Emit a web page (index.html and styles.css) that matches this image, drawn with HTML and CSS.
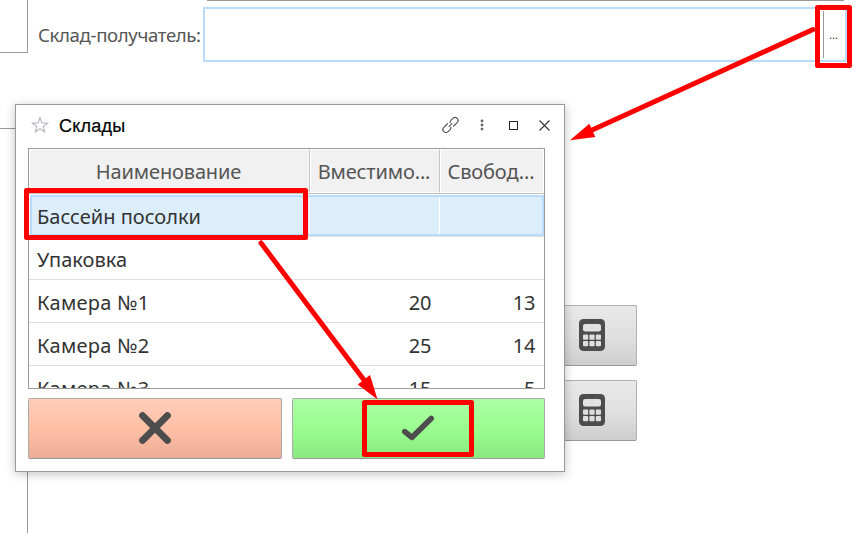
FILE: index.html
```html
<!DOCTYPE html>
<html lang="ru">
<head>
<meta charset="utf-8">
<title>Склады</title>
<link rel="stylesheet" href="styles.css">
</head>
<body>
<div class="page">
  <aside class="side">
    <div class="side-top"></div>
    <div class="side-bottom"></div>
  </aside>
  <main class="main">
    <div class="prev-field"></div>
    <div class="field-row">
      <label class="field-label"><span>Склад-получатель:</span></label>
      <div class="field"><button class="field-more">...</button></div>
    </div>
    <div class="tools">
      <button class="tool">
        <svg width="26" height="32" viewBox="0 0 26 32"><rect width="26" height="32" rx="4.5" fill="#4d4d4d"/><rect x="4" y="5" width="18" height="7.4" rx="2.2" fill="#e2e2e2"/><g fill="#dedede"><rect x="4" y="15.6" width="5.2" height="5.2" rx="1"/><rect x="10.4" y="15.6" width="5.2" height="5.2" rx="1"/><rect x="16.8" y="15.6" width="5.2" height="5.2" rx="1"/><rect x="4" y="22" width="5.2" height="5.2" rx="1"/><rect x="10.4" y="22" width="5.2" height="5.2" rx="1"/><rect x="16.8" y="22" width="5.2" height="5.2" rx="1"/></g></svg>
      </button>
      <button class="tool">
        <svg width="26" height="32" viewBox="0 0 26 32"><rect width="26" height="32" rx="4.5" fill="#4d4d4d"/><rect x="4" y="5" width="18" height="7.4" rx="2.2" fill="#e2e2e2"/><g fill="#dedede"><rect x="4" y="15.6" width="5.2" height="5.2" rx="1"/><rect x="10.4" y="15.6" width="5.2" height="5.2" rx="1"/><rect x="16.8" y="15.6" width="5.2" height="5.2" rx="1"/><rect x="4" y="22" width="5.2" height="5.2" rx="1"/><rect x="10.4" y="22" width="5.2" height="5.2" rx="1"/><rect x="16.8" y="22" width="5.2" height="5.2" rx="1"/></g></svg>
      </button>
    </div>
  </main>
</div>

<section class="dialog">
  <header class="titlebar">
    <svg class="star" width="18" height="18" viewBox="0 0 18 18"><path d="M9 1.6 L10.9 7 L16.6 7.1 L12.1 10.5 L13.7 15.9 L9 12.7 L4.3 15.9 L5.9 10.5 L1.4 7.1 L7.1 7 Z" fill="none" stroke="#b3b8c0" stroke-width="1.1"/></svg>
    <h1 class="title">Склады</h1>
    <div class="controls">
      <svg width="18" height="18" viewBox="0 0 18 18" fill="none" stroke="#555" stroke-width="1.2" stroke-linecap="round"><g transform="translate(9.5 9) rotate(-45)"><path d="M-.5 -3 H-5.6 A3 3 0 0 0 -5.6 3 H-3 A3 3 0 0 0 -.6 1.8" transform="translate(-.8 0)"/><path d="M.5 3 H5.6 A3 3 0 0 0 5.6 -3 H3 A3 3 0 0 0 .6 -1.8" transform="translate(.8 0)"/><path d="M-2.2 0 H2.2" stroke-width="1"/></g></svg>
      <svg width="4" height="12" viewBox="0 0 4 12" fill="#666"><circle cx="2" cy="1.9" r="1.4"/><circle cx="2" cy="6" r="1.4"/><circle cx="2" cy="10.1" r="1.4"/></svg>
      <svg width="9" height="9" viewBox="0 0 9 9"><rect x=".5" y=".5" width="8" height="8" fill="none" stroke="#222"/></svg>
      <svg width="11" height="11" viewBox="0 0 11 11"><path d="M.5 .5 L10.5 10.5 M10.5 .5 L.5 10.5" stroke="#333" stroke-width="1.1"/></svg>
    </div>
  </header>
  <div class="table">
    <div class="row head">
      <div class="cell"><span class="tight">Наименование</span></div>
      <div class="cell"><span class="tight">Вместимо...</span></div>
      <div class="cell"><span class="tight">Свобод...</span></div>
    </div>
    <div class="row selected"><div class="cell"><span>Бассейн посолки</span></div><div class="cell"></div><div class="cell"></div></div>
    <div class="row"><div class="cell"><span>Упаковка</span></div><div class="cell"></div><div class="cell"></div></div>
    <div class="row"><div class="cell"><span class="wide">Камера №1</span></div><div class="cell num">20</div><div class="cell num">13</div></div>
    <div class="row"><div class="cell"><span class="wide">Камера №2</span></div><div class="cell num">25</div><div class="cell num">14</div></div>
    <div class="row"><div class="cell"><span class="wide">Камера №3</span></div><div class="cell num">15</div><div class="cell num">5</div></div>
  </div>
  <footer class="actions">
    <button class="btn cancel"><svg width="32" height="32" viewBox="0 0 32 32"><path d="M3.6 3.6 L28.4 28.4 M28.4 3.6 L3.6 28.4" stroke="#4d4d4d" stroke-width="7" stroke-linecap="round"/></svg></button>
    <button class="btn ok"><svg width="32" height="26" viewBox="0 0 32 26"><path d="M2.8 16.6 L9.8 22.4 L29.2 3.4" fill="none" stroke="#4d4d4d" stroke-width="5.6" stroke-linecap="round" stroke-linejoin="round"/></svg></button>
  </footer>
</section>

<svg class="marks" width="855" height="533" viewBox="0 0 855 533">
  <g fill="none" stroke="#f00" stroke-width="5" stroke-linecap="round" stroke-linejoin="round">
    <rect x="817.5" y="7.5" width="32" height="58"/>
    <rect x="26.5" y="190.5" width="279" height="47"/>
    <rect x="364.5" y="402.5" width="107" height="52"/>
    <path d="M813 29.5 L590 131"/>
    <path d="M261 243 L367 384"/>
  </g>
  <path d="M570 140.3 L589.3 123.7 L595.3 136.9 Z M377.5 399.5 L357.7 384.5 L370 375 Z" fill="#f00"/>
</svg>
</body>
</html>
```
FILE: styles.css
```css
* { box-sizing: border-box; }
body {
  margin: 0;
  width: 855px;
  height: 533px;
  overflow: hidden;
  position: relative;
  background: #fff;
  font-family: "Noto Sans", "Open Sans", sans-serif;
  color: #333;
}
button { padding: 0; font: inherit; }
svg { display: block; flex: none; }
span { white-space: nowrap; }

.page { display: flex; height: 533px; }
.side { width: 28px; display: flex; flex-direction: column; gap: 75px; }
.side-top { height: 53px; border: solid #999; border-width: 0 1px 1px 0; }
.side-bottom { flex: 1; border: solid #999; border-width: 1px 1px 0 0; }
.main { flex: 1; display: flex; flex-direction: column; }
.prev-field { height: 1px; margin: 0 11px 0 179px; background: #999; }
.field-row { display: flex; margin-top: 6px; height: 55px; padding-right: 8px; }
.field-label { width: 175px; padding: 0 0 1px 10px; display: flex; align-items: center; font-size: 18.6px; letter-spacing: -.36px; color: #555; }
.field { flex: 1; border: 2px solid #b9dcfa; display: flex; justify-content: flex-end; padding: 2px 0; }
.field-more { width: 22px; padding-right: 2px; border: 0; border-left: 1px solid #999; background: none; font-size: 11px; line-height: 46px; color: #333; }
.tools { margin: 243px 0 0 520px; display: flex; flex-direction: column; gap: 14px; }
.tool {
  width: 89px; height: 61px; padding: 0 0 2px 30px;
  border: 1px solid #b0b0b0; border-bottom-color: #999; border-radius: 2px;
  background: linear-gradient(#e9e9e9, #dfdfdf 55%, #cecece);
  display: flex; align-items: center;
}

.dialog {
  position: absolute; left: 15px; top: 104px; width: 550px; height: 368px;
  padding: 0 19px 0 12px;
  background: #fff; border: 1px solid #999;
  box-shadow: 0 2px 10px rgba(0, 0, 0, .24);
  display: flex; flex-direction: column;
}
.titlebar { height: 43px; display: flex; align-items: center; padding: 0 0 3px 3px; }
.title { margin: 0 0 0 10px; padding-top: 1px; font: 400 18px/20px "Liberation Sans", sans-serif; letter-spacing: .25px; color: #000; flex: 1; -webkit-text-stroke: .2px #000; }
.controls { display: flex; align-items: center; }
.controls svg:nth-child(2) { margin-left: 21px; }
.controls svg:nth-child(3) { margin-left: 25px; }
.controls svg:nth-child(4) { margin: 0 -5px 0 21px; }

.table { width: 517px; height: 241px; border: 1px solid #999; overflow: hidden; font-size: 20px; }
.row { display: grid; grid-template-columns: 281px 130px 104px; height: 43px; border-bottom: 1px solid #e0e0e0; }
.cell { display: flex; align-items: center; padding: 2px 8px 0; overflow: hidden; }
.cell.num { justify-content: flex-end; padding-right: 9px; letter-spacing: -.35px; }
.tight { letter-spacing: -.15px; }
.wide { letter-spacing: .25px; }
.head { height: 45px; border-bottom-color: #c0c0c0; color: #555; }
.head .cell { justify-content: center; background: #f1f1f1; border: 1px solid #fff; border-right-color: #c6c6c6; padding: 0 2px 0 0; }
.head .cell:last-child { border-right-color: #fff; }
.selected { grid-template-columns: 280px 130px 104px; background: #dceefc; box-shadow: inset 0 0 0 2px #b9dcfa; border-bottom: 0; height: 41px; margin: 1px 0 0 1px; }
.selected + .row { border-top: 1px solid #e0e0e0; height: 44px; }
.selected .cell { padding-left: 7px; margin: 2px 0; border-right: 1px solid #fff; }
.selected .cell:last-child { border-right: 0; }

.actions { display: flex; gap: 10px; margin-top: 9px; width: 517px; }
.btn { height: 61px; padding-bottom: 2px; border: 1px solid #aaa; border-bottom-color: #999; border-radius: 2px; display: flex; align-items: center; justify-content: center; }
.cancel { width: 254px; background: linear-gradient(#ffcdb9, #ffbea4 55%, #e9ad96); }
.ok { width: 253px; padding-right: 2px; background: linear-gradient(#adffa6, #98fc8d 55%, #8ae981); }

.marks { position: absolute; left: 0; top: 0; }
```
